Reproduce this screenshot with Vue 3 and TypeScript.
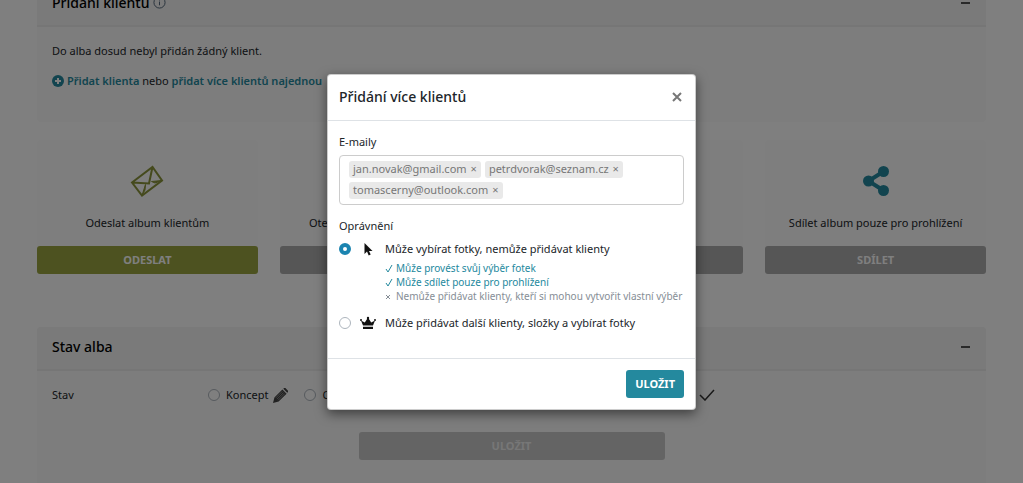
<script setup lang="ts">
import { ref } from 'vue'

interface Action { title: string; button: string; icon: 'mail' | 'share' | 'none'; primary: boolean }

const actions: Action[] = [
  { title: 'Odeslat album klientům', button: 'Odeslat', icon: 'mail', primary: true },
  { title: 'Otevřít album z pohledu klienta', button: 'Otevřít', icon: 'none', primary: false },
  { title: 'Stáhnout fotky', button: 'Stáhnout', icon: 'none', primary: false },
  { title: 'Sdílet album pouze pro prohlížení', button: 'Sdílet', icon: 'share', primary: false },
]

const emails = ref<string[]>(['jan.novak@gmail.com', 'petrdvorak@seznam.cz', 'tomascerny@outlook.com'])
const permission = ref('select')
const state = ref('')
const removeEmail = (mail: string) => { emails.value = emails.value.filter((m) => m !== mail) }
</script>

<template>
  <div class="viewport">
    <main class="page">
      <section class="panel">
        <header class="panel-head">
          <h2>Přidání klientů
            <svg class="info" viewBox="0 0 14 14" aria-hidden="true"><circle cx="7" cy="7" r="6" /><path d="M7 6v4M7 3.6v1.2" /></svg>
          </h2>
          <button class="collapse" type="button" aria-label="Sbalit"><span></span></button>
        </header>
        <div class="panel-body clients">
          <p>Do alba dosud nebyl přidán žádný klient.</p>
          <p class="links">
            <svg class="plus" viewBox="0 0 12 12" aria-hidden="true"><circle cx="6" cy="6" r="6" /><path d="M6 3v6M3 6h6" /></svg>
            <a href="#">Přidat klienta</a> nebo <a href="#">přidat více klientů najednou</a>
          </p>
        </div>
      </section>

      <section class="actions">
        <article v-for="a in actions" :key="a.title" class="card">
          <div class="card-body">
            <div class="card-icon">
              <svg v-if="a.icon === 'mail'" class="mail" viewBox="0 0 34 32" aria-hidden="true">
                <path d="M2 17.500 22.500 2 32 15.500 12 30.500ZM2 17.500 19 18.500 22.500 2" />
                <path class="fold" d="M15.500 19.500 15 25 12 30.500ZM21.500 16.500 32 15.500 25 18Z" />
              </svg>
              <svg v-else-if="a.icon === 'share'" class="share" viewBox="0 0 26 30" aria-hidden="true">
                <path d="M20.500 5.500 5.500 15l15 9.500" /><circle cx="20.500" cy="5.500" r="5.500" /><circle cx="5.500" cy="15" r="5.500" /><circle cx="20.500" cy="24.500" r="5.500" />
              </svg>
            </div>
            <p>{{ a.title }}</p>
          </div>
          <button type="button" class="btn" :class="a.primary ? 'green' : 'gray'">{{ a.button }}</button>
        </article>
      </section>

      <section class="panel">
        <header class="panel-head">
          <h2>Stav alba</h2>
          <button class="collapse" type="button" aria-label="Sbalit"><span></span></button>
        </header>
        <div class="panel-body status">
          <div class="status-row">
            <span class="status-label">Stav</span>
            <div class="options">
              <label><input v-model="state" type="radio" name="state" value="draft" /><span>Koncept</span>
                <svg class="pencil" viewBox="0 0 16 16" aria-hidden="true"><path d="M0 16l1.500-6L10 1.500l4.500 4.500L6 14.500zM11 .8 11.800 0h1.400L16 2.800v1.400l-.8.8z" /><path class="cut" d="M3 10.500 10 3.500M4.300 11.800l7-7M5.500 13l7-7" /></svg>
              </label>
              <label><input v-model="state" type="radio" name="state" value="open" /><span>Otevřeno pro výběr</span></label>
              <label class="done"><input v-model="state" type="radio" name="state" value="done" /><span>Výběr dokončen</span>
                <svg class="check" viewBox="0 0 16 12" aria-hidden="true"><path d="M1 6l5 5L15 1" /></svg>
              </label>
            </div>
          </div>
          <button type="button" class="btn save-state" disabled>Uložit</button>
        </div>
      </section>
    </main>

    <div class="backdrop">
      <form class="modal" role="dialog" aria-labelledby="modal-title" @submit.prevent>
        <header class="modal-head">
          <h2 id="modal-title">Přidání více klientů</h2>
          <button class="close" type="button" aria-label="Zavřít"><svg viewBox="0 0 10 10" aria-hidden="true"><path d="M1 1l8 8M9 1 1 9" /></svg></button>
        </header>
        <div class="modal-body">
          <label class="field-label" for="emails">E-maily</label>
          <div class="tags">
            <span v-for="mail in emails" :key="mail" class="tag">{{ mail }}<button type="button" :aria-label="'Odebrat ' + mail" @click="removeEmail(mail)">×</button></span>
            <input id="emails" type="email" />
          </div>
          <fieldset>
            <legend>Oprávnění</legend>
            <label class="perm">
              <input v-model="permission" type="radio" name="permission" value="select" />
              <svg viewBox="0 0 16 14" aria-hidden="true"><path d="M4.500 1v11l2.500-2.400 1.700 3.900 2-.9L9 8.900h3.500z" /></svg>
              <span>Může vybírat fotky, nemůže přidávat klienty</span>
            </label>
            <ul>
              <li><svg viewBox="0 0 8 9" aria-hidden="true"><path d="M1 5l2 3L7 1" /></svg>Může provést svůj výběr fotek</li>
              <li><svg viewBox="0 0 8 9" aria-hidden="true"><path d="M1 5l2 3L7 1" /></svg>Může sdílet pouze pro prohlížení</li>
              <li class="no"><svg viewBox="0 0 8 9" aria-hidden="true"><path d="M1 3l4 4M5 3 1 7" /></svg>Nemůže přidávat klienty, kteří si mohou vytvořit vlastní výběr</li>
            </ul>
            <label class="perm">
              <input v-model="permission" type="radio" name="permission" value="manage" />
              <svg viewBox="0 0 16 14" aria-hidden="true"><path d="M3 9.500 1 4.500 4.800 6.500 8 1.500l3.200 5L15 4.500l-2 5zM3 10.800h10V13H3z" /><circle cx="1" cy="4" r="1" /><circle cx="8" cy="2" r="1.200" /><circle cx="15" cy="4" r="1" /></svg>
              <span>Může přidávat další klienty, složky a vybírat fotky</span>
            </label>
          </fieldset>
        </div>
        <footer class="modal-foot"><button type="submit" class="btn teal">Uložit</button></footer>
      </form>
    </div>
  </div>
</template>

<style>
body { background: #fff; }
</style>

<style scoped>
* { box-sizing: border-box; }
.viewport { position: relative; height: 100vh; overflow: hidden; font: 11px/18px "Noto Sans", "Open Sans", sans-serif; color: #212529; }
h2, p, ul, fieldset { margin: 0; padding: 0; border: 0; }
h2 { font-size: 14px; line-height: 20px; font-weight: 500; }
button, input { font: inherit; }
svg { fill: none; stroke: currentColor; }
.page { padding: 0 37px; margin-top: -17px; }
.panel { background: #fafafa; border-radius: 4px; overflow: hidden; }
.panel-head { display: flex; align-items: center; justify-content: space-between; height: 44px; padding: 0 16px 2px 15px; background: #f4f4f4; border-bottom: 2px solid #ececec; color: #000; }
.info { width: 13px; height: 13px; vertical-align: -1px; color: #4a5d72; }
.collapse { display: flex; align-items: center; width: 9px; height: 18px; padding: 0; border: 0; background: none; }
.collapse span { width: 9px; height: 2px; background: #555; }
.clients { padding: 15px; height: 95px; }
.links { margin-top: 12px; }
.links a { color: #24899e; font-weight: 600; text-decoration: none; }
.plus { width: 12px; height: 12px; margin-right: 3px; vertical-align: -2px; }
.plus circle { fill: #24899e; stroke: none; }
.plus path { stroke: #fff; stroke-width: 2; }
.actions { display: grid; grid-template-columns: repeat(4, 1fr); gap: 22px; margin: 18px 0 53px; }
.card { background: #fcfcfc; border-radius: 4px; }
.card-body { display: flex; flex-direction: column; align-items: center; padding: 24px 8px 14px; gap: 16px; }
.card-icon { height: 34px; display: flex; align-items: center; }
.mail { width: 34px; height: 32px; color: #8a943b; stroke-width: 2; }
.mail .fold { fill: currentColor; stroke-width: 1; }
.share { width: 26px; height: 30px; color: #24899e; stroke-width: 4; }
.share circle { fill: currentColor; stroke: none; }
.btn { display: block; height: 28px; border: 0; border-radius: 3px; color: #fff; font-weight: 700; line-height: 18px; text-transform: uppercase; }
.card .btn { width: 100%; }
.green { background: #9aa541; }
.gray { background: #acacac; }
.status { padding: 15px 15px 60px; }
.status-row { display: flex; align-items: center; }
.status-label { width: 156px; }
.options { display: flex; gap: 16px; width: 507px; }
.options label { display: flex; align-items: center; }
.options .done { margin-left: auto; }
.options span { margin-left: 6px; white-space: nowrap; }
input[type="radio"] { appearance: none; flex: none; width: 12px; height: 12px; margin: 0; border: 1px solid #adb5bd; border-radius: 50%; background: #fff; }
input[type="radio"]:checked { border: 4px solid #1b84b0; }
.pencil { width: 15px; height: 15px; margin-left: 5px; color: #444; }
.pencil path { fill: currentColor; stroke: none; }
.pencil .cut { fill: none; stroke: #bbb; stroke-width: 0.6; }
.check { width: 16px; height: 12px; margin-left: 8px; color: #333; stroke-width: 1.5; }
.save-state { width: 306px; margin: 28px auto 0; background: #c8c8c8; color: #eee; }
.backdrop { position: absolute; inset: 0; display: flex; justify-content: center; align-items: center; background: rgba(0, 0, 0, 0.5); }
.modal { width: 369px; background: #fff; border: 1px solid rgba(0, 0, 0, 0.2); border-radius: 4px; box-shadow: 0 4px 12px rgba(0, 0, 0, 0.5); }
.modal-head { display: flex; align-items: center; justify-content: space-between; height: 46px; padding: 0 13px 0 11px; border-bottom: 1px solid #dee2e6; }
.close { display: flex; padding: 0; border: 0; background: none; color: #777; }
.close svg { width: 10px; height: 10px; stroke-width: 2; }
.modal-body { padding: 12px 11px 26px; }
.field-label, legend { display: block; padding: 0; }
.tags { display: flex; flex-wrap: wrap; gap: 4px; min-height: 49px; margin: 4px 0 12px; padding: 5px 9px; border: 1px solid #ccc; border-radius: 4px; }
.tag { display: flex; align-items: center; height: 17px; padding: 0 4px; border-radius: 3px; background: #e9e9e9; color: #777; }
.tag button { padding: 0; margin-left: 4px; border: 0; background: none; color: #777; }
.tags input { flex: 1; width: 20px; min-width: 20px; height: 17px; padding: 0; border: 0; outline: 0; background: none; }
.perm { display: flex; align-items: center; margin-top: 5px; }
.perm svg { width: 16px; height: 14px; margin: 0 9px; fill: #111; stroke: none; }
ul { list-style: none; margin: 3px 0 11px 46px; font-size: 10px; line-height: 14px; color: #24899e; }
li { white-space: nowrap; }
li svg { width: 8px; height: 9px; margin-right: 3px; vertical-align: -1px; }
li.no { color: #868e96; }
.modal-foot { display: flex; justify-content: flex-end; padding: 11px; border-top: 1px solid #dee2e6; }
.teal { background: #24899e; padding: 0 9px; }
</style>
